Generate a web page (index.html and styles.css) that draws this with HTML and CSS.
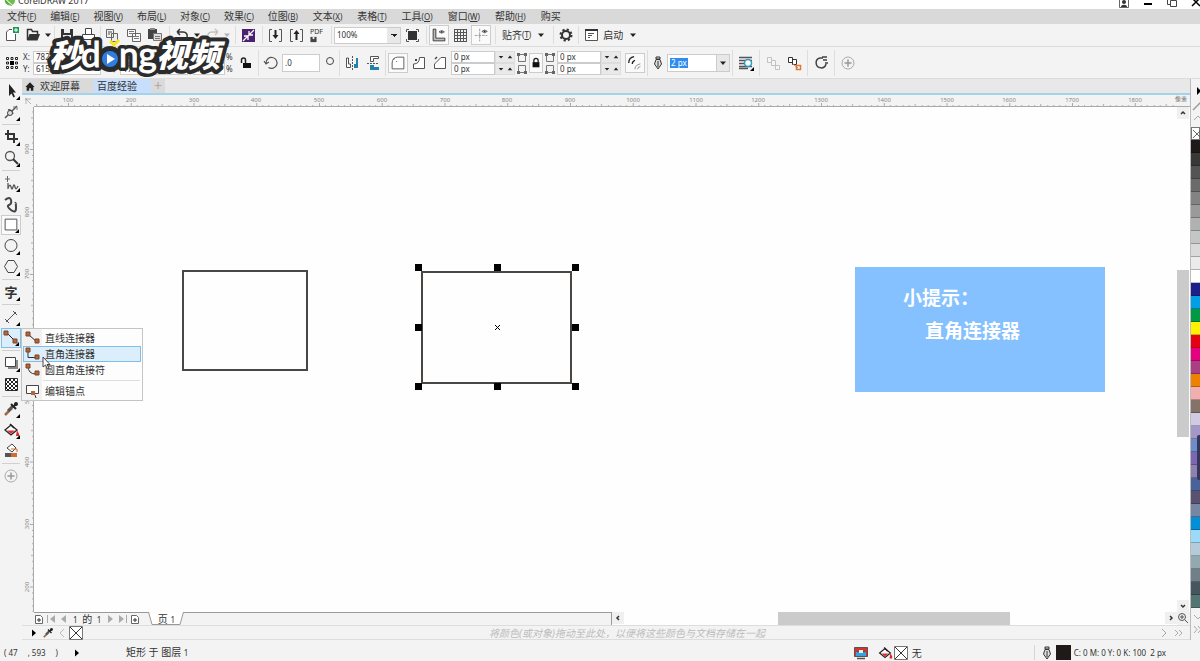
FILE: index.html
```html
<!DOCTYPE html>
<html lang="zh-CN">
<head>
  <meta charset="UTF-8" />
  <title>CorelDRAW 2017</title>
  <meta name="viewport" content="width=device-width, initial-scale=1.0" />
  <link rel="stylesheet" href="styles.css">
</head>
<body>

  <!-- Shared icons -->
  <svg class="defs" aria-hidden="true">
    <symbol id="i-caret" viewBox="0 0 8 8"><path d="M1 2.500h6L4 6z" fill="#222"/></symbol>
    <symbol id="i-play" viewBox="0 0 8 8"><path d="M2 0.500v7L6 4z" fill="#000"/></symbol>
    <symbol id="i-none" viewBox="0 0 14 14"><path d="M0.500 0.500h13v13h-13z" fill="#fff" stroke="#777"/><path d="M1 1l12 12M13 1L1 13" stroke="#333"/></symbol>
    <symbol id="i-pen" viewBox="0 0 12 14"><path d="M4 1h4v2H4zM4 3.500L2.500 8 6 13 9.500 8 8 3.500z" fill="#ddd" stroke="#333"/><path d="M6 5v6" stroke="#333"/></symbol>
    <symbol id="i-plus" viewBox="0 0 20 20"><circle cx="10" cy="10" r="6" fill="none" stroke="#aaa"/><path d="M10 6.500v7M6.500 10h7" stroke="#999" stroke-width="1.500"/></symbol>
    <symbol id="i-bucket" viewBox="0 0 20 20"><path d="M4 10l6-5 6 5-6 5z" fill="#fff" stroke="#222" stroke-width="1.300"/><path d="M6 10.500h8l-4 3.500z" fill="#e03030"/><path d="M9 4l4 4" stroke="#222" stroke-width="1.500"/><path d="M16 10l2 4v2h-3z" fill="#d9252b"/></symbol>
    <symbol id="i-dropper" viewBox="0 0 20 20"><path d="M4 16l7-7" stroke="#a06a48" stroke-width="2.500"/><path d="M7 12l5-5" stroke="#555" stroke-width="3"/><path d="M10 5l5 5M12 8l3-3" stroke="#222" stroke-width="2"/><circle cx="15" cy="5" r="2" fill="#222"/></symbol>
    <symbol id="i-corners" viewBox="0 0 12 24"><path d="M2.500 3.500h7v7h-7zM2.500 14.500h7v7h-7z" fill="none" stroke="#777"/><path d="M1 2h3v3H1zM8 2h3v3H8zM1 20h3v3H1zM8 20h3v3H8z" fill="#666"/></symbol>
    <symbol id="i-page" viewBox="0 0 10 10"><path d="M1.500 1.500h5l2 2v6h-7z" fill="#fff" stroke="#666"/><path d="M3 6h4M5 4v4" stroke="#333"/></symbol>
  </svg>

  <header class="titlebar">
    <svg class="app-icon" viewBox="0 0 14 14"><circle cx="8" cy="4" r="6" fill="#6cbf4a"/><path d="M2 1l9 8-3 1z" fill="#e9f3dd"/><path d="M3 5l7 5" stroke="#2d7d32"/></svg>
    <span class="app-name">CorelDRAW 2017</span>
    <div class="window-buttons">
      <button type="button" aria-label="账户"><svg viewBox="0 0 12 12"><path d="M1.500 0v8.500h9V0" fill="none" stroke="#666"/><circle cx="6" cy="3" r="2" fill="#333"/><path d="M3 8c0-3 6-3 6 0z" fill="#333"/></svg></button>
      <button type="button" aria-label="最小化"><svg viewBox="0 0 12 12"><path d="M2 5h8" stroke="#000" stroke-width="2"/></svg></button>
      <button type="button" aria-label="还原"><svg viewBox="0 0 12 12"><path d="M1.500 0v5.500h3M4.500 1.500h6v6h-6z" fill="none" stroke="#444"/></svg></button>
      <button type="button" aria-label="关闭"><svg viewBox="0 0 12 12"><path d="M2 7l7-7M3 0l7 7" stroke="#000" stroke-width="1.500"/></svg></button>
    </div>
  </header>

  <nav class="menubar">
    <button type="button">文件<small>(<u>F</u>)</small></button>
    <button type="button">编辑<small>(<u>E</u>)</small></button>
    <button type="button">视图<small>(<u>V</u>)</small></button>
    <button type="button">布局<small>(<u>L</u>)</small></button>
    <button type="button">对象<small>(<u>C</u>)</small></button>
    <button type="button">效果<small>(<u>C</u>)</small></button>
    <button type="button">位图<small>(<u>B</u>)</small></button>
    <button type="button">文本<small>(<u>X</u>)</small></button>
    <button type="button">表格<small>(<u>T</u>)</small></button>
    <button type="button">工具<small>(<u>O</u>)</small></button>
    <button type="button">窗口<small>(<u>W</u>)</small></button>
    <button type="button">帮助<small>(<u>H</u>)</small></button>
    <button type="button">购买</button>
  </nav>

  <!-- Standard toolbar -->
  <div class="bar toolbar">
    <div class="group">
      <button type="button" class="icon" aria-label="新建"><svg viewBox="0 0 20 20"><path d="M10 4.500H7L4.500 7v8.500h9V9" fill="#fff" stroke="#555"/><path d="M11 2h6v6h-6z" fill="#1a9c50"/><path d="M14 3v4M12 5h4" stroke="#fff"/></svg></button>
      <button type="button" class="icon" aria-label="打开"><svg viewBox="0 0 20 20"><path d="M4.500 15V4.500h4l1 2h5V9" fill="none" stroke="#333" stroke-width="1.500"/><path d="M4 15.500L6.500 9H17l-2.500 6.500z" fill="#333"/></svg></button>
      <button type="button" class="caret" aria-label="最近文档"><svg><use href="#i-caret"/></svg></button>
    </div>
    <div class="group">
      <button type="button" class="icon" aria-label="保存"><svg viewBox="0 0 20 20"><path d="M4 4h12v12H4z" fill="#333"/><path d="M7 4h6v4H7zM6 10h8v6H6z" fill="#eee"/></svg></button>
      <button type="button" class="icon" aria-label="打印"><svg viewBox="0 0 20 20"><path d="M7.500 9V3.500h6V9M4.500 9.500h12v5h-12z" fill="#fff" stroke="#444"/></svg></button>
    </div>
    <div class="group gap-end">
      <button type="button" class="icon" aria-label="剪切"><svg viewBox="0 0 20 20"><path d="M3.500 4.500h7v8h-7zM8.500 8.500h6v8h-6z" fill="#eee" stroke="#666"/><path d="M5 7h4M5 9h2" stroke="#555"/></svg></button>
      <button type="button" class="icon" aria-label="复制"><svg viewBox="0 0 20 20"><path d="M3.500 4.500h8v7h-8zM8.500 8.500h8v8h-8z" fill="#f8f8f8" stroke="#666"/><path d="M5 6.500h5M5 8.500h3M10 11.500h5M10 13.500h5" stroke="#777"/></svg></button>
      <button type="button" class="icon" aria-label="粘贴"><svg viewBox="0 0 20 20"><path d="M3 4h9v10H3z" fill="#444"/><path d="M5 3h5v2H5z" fill="#888"/><path d="M8.500 8.500h8v7h-8z" fill="#ddd" stroke="#777"/><path d="M10 11.500h5M10 13.500h5" stroke="#777"/></svg></button>
    </div>
    <div class="group gap-end">
      <button type="button" class="icon" aria-label="撤消"><svg viewBox="0 0 20 20"><path d="M5 7h6c3 0 5 2 4 6M5 7l3-3M5 7l3 3" fill="none" stroke="#333" stroke-width="1.500"/></svg></button>
      <button type="button" class="caret" aria-label="撤消列表"><svg><use href="#i-caret"/></svg></button>
      <button type="button" class="icon faded" aria-label="重做"><svg viewBox="0 0 20 20"><path d="M16 7h-6c-3 0-5 2-4 6M16 7l-3-3M16 7l-3 3" fill="none" stroke="#555" stroke-width="1.500"/></svg></button>
      <button type="button" class="caret faded" aria-label="重做列表"><svg><use href="#i-caret"/></svg></button>
    </div>
    <div class="group gap-end">
      <button type="button" class="icon" aria-label="搜索内容"><svg viewBox="0 0 20 20"><path d="M4 4h13v13H4z" fill="#4c2172"/><path d="M5 16L16 5M6 11h4v4M11 6v4h4" stroke="#fff" stroke-width="1.300" fill="none"/></svg></button>
    </div>
    <div class="group gap-end">
      <button type="button" class="icon" aria-label="导入"><svg viewBox="0 0 20 20"><path d="M7 4.500H4.500v12H7M14 4.500h2.500v12H14" fill="none" stroke="#555"/><path d="M10.500 5v7" stroke="#222" stroke-width="2"/><path d="M7.500 10h6l-3 4z" fill="#222"/></svg></button>
      <button type="button" class="icon" aria-label="导出"><svg viewBox="0 0 20 20"><path d="M7 4.500H4.500v12H7M14 4.500h2.500v12H14" fill="none" stroke="#555"/><path d="M10.500 8v7" stroke="#222" stroke-width="2"/><path d="M7.500 9h6l-3-4z" fill="#222"/></svg></button>
      <button type="button" class="icon pdf" aria-label="发布为 PDF"><span>PDF</span><svg viewBox="0 0 8 7"><path d="M0.500 0.500h7v6h-7z" fill="#444"/><path d="M3 0v3h2V0" fill="#eee"/></svg></button>
    </div>
    <div class="group gap-end">
      <select class="zoom-level" aria-label="缩放级别"><option>100%</option></select>
      <button type="button" class="icon" aria-label="全屏预览"><svg viewBox="0 0 20 20"><path d="M6 6h9v9H6z" fill="#333"/><path d="M4.500 7V4.500H7M14 4.500h2.500V7M4.500 14v2.500H7M14 16.500h2.500V14" fill="none" stroke="#555"/></svg></button>
    </div>
    <div class="group gap-end">
      <button type="button" class="icon boxed" aria-label="显示标尺"><svg viewBox="0 0 20 20"><path d="M3.500 3.500h3v10h10v3h-13z" fill="#bbb" stroke="#333"/><path d="M10 6.500q3-3 6 0q-3 3-6 0z" fill="#fff" stroke="#555"/><circle cx="13" cy="6.500" r="1" fill="#222"/></svg></button>
      <button type="button" class="icon" aria-label="显示网格"><svg viewBox="0 0 20 20"><path d="M4.500 4v13M7.500 4v13M10.500 4v13M13.500 4v13M16.500 4v13M4 4.500h13M4 7.500h13M4 10.500h13M4 13.500h13M4 16.500h13" stroke="#555"/></svg></button>
      <button type="button" class="icon boxed" aria-label="显示辅助线"><svg viewBox="0 0 20 20"><path d="M8.500 3v14M3 10.500h14" stroke="#999" stroke-dasharray="3 1"/><path d="M11 6q3-3 6 0q-3 3-6 0z" fill="#fff" stroke="#555"/><circle cx="14" cy="6" r="1" fill="#222"/></svg></button>
    </div>
    <div class="group gap-end">
      <button type="button" class="text-button">贴齐<small>(<u>T</u>)</small><svg class="drop"><use href="#i-caret"/></svg></button>
    </div>
    <div class="group">
      <button type="button" class="icon" aria-label="选项"><svg viewBox="0 0 20 20"><circle cx="10" cy="10" r="4" fill="none" stroke="#333" stroke-width="2"/><circle cx="10" cy="10" r="5.500" fill="none" stroke="#333" stroke-width="2" stroke-dasharray="2.200 2.120"/></svg></button>
    </div>
    <div class="group last">
      <button type="button" class="text-button start"><svg class="pic" viewBox="0 0 20 20"><path d="M4.500 4.500h12v11h-12z" fill="#fff" stroke="#555"/><path d="M4 5h13" stroke="#333" stroke-width="2"/><path d="M7 8.500h6M7 10.500h4M7 12.500h2" stroke="#555"/></svg>启动<svg class="drop"><use href="#i-caret"/></svg></button>
    </div>
  </div>

  <!-- Property bar -->
  <div class="bar property-bar">
    <div class="group">
      <button type="button" class="icon" aria-label="对象原点"><svg viewBox="0 0 20 20"><path d="M4.500 4.500h2v2h-2zM9 4.500h2v2H9zM13.500 4.500h2v2h-2zM4.500 9h2v2h-2zM13.500 9h2v2h-2zM4.500 13.500h2v2h-2zM9 13.500h2v2H9zM13.500 13.500h2v2h-2z" fill="#fff" stroke="#222"/><path d="M8 8h4v4H8z" fill="#000"/></svg></button>
      <div class="fields labelled">
        <label for="pos-x">X:</label><input id="pos-x" class="w-large" value="782 px">
        <label for="pos-y">Y:</label><input id="pos-y" class="w-large" value="615 px">
      </div>
      <div class="fields labelled size">
        <label for="size-w">↔</label><input id="size-w" class="w-large" value="240 px">
        <label for="size-h">↕</label><input id="size-h" class="w-large" value="178 px">
      </div>
      <div class="fields percent">
        <input id="scale-x" class="w-small" value="100.0"><label for="scale-x">%</label>
        <input id="scale-y" class="w-small" value="100.0"><label for="scale-y">%</label>
      </div>
      <button type="button" class="icon" aria-label="锁定比率"><svg viewBox="0 0 20 20"><path d="M5.500 10V7q0-2 2-2t2 2v3" fill="none" stroke="#222" stroke-width="1.500"/><path d="M7 10h8v5H7z" fill="#111"/></svg></button>
    </div>
    <div class="group">
      <label class="icon" for="angle" aria-label="旋转角度"><svg viewBox="0 0 20 20"><path d="M5 10a5.500 5.500 0 1 1 2.500 4.500M3 8l2 3 3-2" fill="none" stroke="#555" stroke-width="1.200"/></svg></label>
      <input id="angle" class="w-angle" value=".0">
      <span class="degree"><svg viewBox="0 0 16 20"><circle cx="9" cy="8" r="3.500" fill="none" stroke="#444"/></svg></span>
    </div>
    <div class="group">
      <button type="button" class="icon" aria-label="水平镜像"><svg viewBox="0 0 20 20"><path d="M4.500 5v9.500h4V11h-2V5z" fill="#fff" stroke="#555"/><path d="M10.500 3v14" stroke="#555" stroke-dasharray="2 1"/><path d="M16 5v10h-4v-4h2V5z" fill="#2382ab"/></svg></button>
      <button type="button" class="icon" aria-label="垂直镜像"><svg viewBox="0 0 20 20"><path d="M7.500 3.500h8v2h-5v3h-3z" fill="#fff" stroke="#555"/><path d="M4 10.500h12" stroke="#555" stroke-dasharray="2 1"/><path d="M7 12h4v2h5v3H7z" fill="#2382ab"/></svg></button>
    </div>
    <div class="group">
      <button type="button" class="icon boxed" aria-label="圆角"><svg viewBox="0 0 20 20"><path d="M3.500 16.500V10q0-6 6-6.500h7v13z" fill="#fff" stroke="#555"/><path d="M5 5h1v1H5zM8 8h1v1H8z" fill="#222"/></svg></button>
      <button type="button" class="icon" aria-label="扇形角"><svg viewBox="0 0 20 20"><path d="M4.500 15.500V11q6 0 6-6.500h5v11z" fill="#fff" stroke="#555"/><path d="M6 6h2v2H6z" fill="#444"/></svg></button>
      <button type="button" class="icon" aria-label="倒棱角"><svg viewBox="0 0 20 20"><path d="M4.500 15.500V11L11 4.500h4.500v11z" fill="#fff" stroke="#555"/><path d="M5 6l2-2" stroke="#444" stroke-width="1.500"/></svg></button>
      <div class="fields spin">
        <input aria-label="左上角半径" value="0 px"><span><svg><use href="#i-caret"/></svg><svg class="up"><use href="#i-caret"/></svg></span>
        <input aria-label="左下角半径" value="0 px"><span><svg><use href="#i-caret"/></svg><svg class="up"><use href="#i-caret"/></svg></span>
      </div>
      <svg class="corners"><use href="#i-corners"/></svg>
      <button type="button" class="icon boxed slim" aria-label="同时编辑所有角"><svg viewBox="0 0 14 20"><path d="M4.500 10V7q0-2.500 2.500-2.500T9.500 7v3" fill="none" stroke="#222" stroke-width="1.500"/><path d="M3 9h8v6H3z" fill="#111"/></svg></button>
      <svg class="corners"><use href="#i-corners"/></svg>
      <div class="fields spin">
        <input aria-label="右上角半径" value="0 px"><span><svg><use href="#i-caret"/></svg><svg class="up"><use href="#i-caret"/></svg></span>
        <input aria-label="右下角半径" value="0 px"><span><svg><use href="#i-caret"/></svg><svg class="up"><use href="#i-caret"/></svg></span>
      </div>
      <span class="spacer"></span>
      <button type="button" class="icon boxed" aria-label="相对角缩放"><svg viewBox="0 0 20 20"><path d="M3 10q0-6 6-7M7 11q0-3 3-4" fill="none" stroke="#222" stroke-width="1.500"/><path d="M10 17q0-5 6-6M13 17q0-3 3-3" fill="none" stroke="#888"/></svg></button>
    </div>
    <div class="group">
      <label class="pen" for="outline" aria-label="轮廓宽度"><svg><use href="#i-pen"/></svg></label>
      <div class="combo">
        <input id="outline" value="2 px">
        <button type="button" aria-label="轮廓宽度列表"><svg><use href="#i-caret"/></svg></button>
      </div>
    </div>
    <div class="group roomy">
      <button type="button" class="icon" aria-label="文本换行"><svg viewBox="0 0 20 20"><path d="M3 4.500h13M3 7.500h13M3 10.500h13M3 13.500h13M3 15.500h9" stroke="#555" stroke-width="1.500"/><circle cx="12" cy="10" r="3.500" fill="#fff" stroke="#2b9bc9" stroke-width="1.500"/><path d="M18 14v4h-4z" fill="#000"/></svg></button>
    </div>
    <div class="group roomy">
      <button type="button" class="icon faded" aria-label="到图层前面"><svg viewBox="0 0 20 20"><path d="M4.500 4.500h4v5h-4zM8.500 7.500h4v5h-4zM12.500 12.500h4v4h-4z" fill="#fff" stroke="#555"/></svg></button>
      <button type="button" class="icon" aria-label="到图层后面"><svg viewBox="0 0 20 20"><path d="M4.500 4.500h4v5h-4zM8.500 6.500h4v5h-4z" fill="#fff" stroke="#333"/><path d="M12.500 12.500h4v4h-4z" fill="#fff" stroke="#d8783a" stroke-width="1.500"/><path d="M9 11l5 4" stroke="#d8783a"/></svg></button>
    </div>
    <div class="group roomy">
      <button type="button" class="icon" aria-label="转换为曲线"><svg viewBox="0 0 20 20"><path d="M12 5H9a5 5 0 1 0 6 6" fill="none" stroke="#444" stroke-width="1.500"/><path d="M11 4h5M12 7h4M14 10h3" stroke="#444" stroke-width="1.500"/></svg></button>
    </div>
    <div class="group roomy last">
      <button type="button" class="icon" aria-label="快速自定义"><svg><use href="#i-plus"/></svg></button>
    </div>
  </div>

  <!-- Video watermark -->
  <svg class="watermark" viewBox="0 0 180 48" role="img" aria-label="秒dong视频">
    <g class="outline">
      <text class="han" x="4" y="34">秒</text><text class="latin" x="36" y="34">d</text><text class="latin" x="74" y="34">ng</text><text class="han" x="111" y="34">视频</text>
      <circle cx="65" cy="26" r="9"/>
    </g>
    <g class="letters">
      <text class="han" x="4" y="34">秒</text><text class="latin" x="36" y="34">d</text><text class="latin" x="74" y="34">ng</text><text class="han" x="111" y="34">视频</text>
    </g>
    <circle cx="65" cy="26" r="8" fill="#2f7de0"/>
    <path d="M62 21v10l8-5z" fill="#fff"/>
    <path d="M65 8l4 4 5-5" fill="none" stroke="#f8e61c" stroke-width="3"/>
  </svg>

  <main class="workspace">
    <aside class="toolbox">
      <button type="button" class="tool" aria-label="选择工具"><svg viewBox="0 0 20 20"><path d="M8 3v12l2.500-2.500 2 4 1.500-1-2-4h3z" fill="#222"/></svg></button>
      <button type="button" class="tool" aria-label="形状工具"><svg viewBox="0 0 20 20"><path d="M4 16L16 4M7 8q3-1 5 4" fill="none" stroke="#555" stroke-width="1.500"/><circle cx="9" cy="11" r="2.500" fill="#ddd" stroke="#444"/><path d="M12 5h4v3" fill="none" stroke="#777"/></svg></button>
      <hr>
      <button type="button" class="tool" aria-label="裁剪工具"><svg viewBox="0 0 20 20"><path d="M7 3v9h10M4 7h9v9" fill="none" stroke="#333" stroke-width="2"/></svg></button>
      <button type="button" class="tool" aria-label="缩放工具"><svg viewBox="0 0 20 20"><circle cx="9" cy="8" r="4.500" fill="none" stroke="#555" stroke-width="1.300"/><path d="M12 11l5 5" stroke="#333" stroke-width="2"/></svg></button>
      <hr>
      <button type="button" class="tool" aria-label="手绘工具"><svg viewBox="0 0 20 20"><path d="M6.500 3v6M4 6h5" stroke="#666"/><path d="M7 10v6M7 15q2-5 3-1t2 0 2 0 3-1" fill="none" stroke="#555" stroke-width="1.300"/></svg></button>
      <button type="button" class="tool plain" aria-label="艺术笔工具"><svg viewBox="0 0 20 20"><path d="M4 6q5-4 6 0t-2 5 2 5 5-2-1-5" fill="none" stroke="#444" stroke-width="2"/></svg></button>
      <button type="button" class="tool boxed" aria-label="矩形工具"><svg viewBox="0 0 20 20"><path d="M3.500 3.500h13v12h-13z" fill="#fff" stroke="#444"/></svg></button>
      <button type="button" class="tool" aria-label="椭圆形工具"><svg viewBox="0 0 20 20"><circle cx="10" cy="9.500" r="6" fill="none" stroke="#444"/></svg></button>
      <button type="button" class="tool" aria-label="多边形工具"><svg viewBox="0 0 20 20"><path d="M7 3.500h6l3.500 6-3.500 6H7l-3.500-6z" fill="none" stroke="#444"/></svg></button>
      <hr>
      <button type="button" class="tool char">字</button>
      <hr>
      <button type="button" class="tool" aria-label="平行度量工具"><svg viewBox="0 0 20 20"><path d="M5 15L15 5M4 12l4 4M12 4l4 4" stroke="#555"/></svg></button>
      <div class="tool-slot">
        <button type="button" class="tool active" aria-label="连接器工具"><svg viewBox="0 0 18 18"><path d="M5 4l9 9" stroke="#222"/><path d="M2 2h4v4H2zM11 10h4v4h-4z" fill="#b5653a" stroke="#7d4526"/></svg></button>
        <div class="flyout">
          <button type="button"><svg viewBox="0 0 18 14"><path d="M5 4l8 7" stroke="#222"/><path d="M2 1h4v4H2zM11 8h4v4h-4z" fill="#b5653a" stroke="#7d4526"/></svg>直线连接器</button>
          <button type="button" class="current"><svg viewBox="0 0 18 14"><path d="M4 3v7.500h8" fill="none" stroke="#333"/><path d="M2 1h4v4H2zM11 8h4v4h-4z" fill="#b5653a" stroke="#7d4526"/></svg>直角连接器</button>
          <button type="button"><svg viewBox="0 0 18 14"><path d="M4 3q0 8 8 8" fill="none" stroke="#333"/><path d="M2 1h4v4H2zM11 8h4v4h-4z" fill="#b5653a" stroke="#7d4526"/></svg>圆直角连接符</button>
          <hr>
          <button type="button"><svg viewBox="0 0 18 14"><path d="M2.500 1.500h12v8h-12z" fill="#fff" stroke="#444"/><path d="M7 7h4v4H7z" fill="#b5653a"/><path d="M11 11l1 3" stroke="#333"/></svg>编辑锚点</button>
          <svg class="cursor" viewBox="0 0 10 14"><path d="M1 1v10l2.500-2 2 4 1.500-1-2-3.500h3z" fill="#fff" stroke="#444"/></svg>
        </div>
      </div>
      <hr>
      <button type="button" class="tool" aria-label="阴影工具"><svg viewBox="0 0 20 20"><path d="M7 7h10v9H7z" fill="#888"/><path d="M4.500 4.500h10v9h-10z" fill="#fff" stroke="#444"/></svg></button>
      <button type="button" class="tool plain" aria-label="透明度工具"><svg viewBox="0 0 20 20"><path d="M4.500 4.500h12v12h-12z" fill="#fff" stroke="#333"/><path d="M4 6h12M4 10h12M4 14h12" stroke="#222" stroke-width="2" stroke-dasharray="2 2"/><path d="M6 8h11M6 12h11M6 16h11" stroke="#222" stroke-width="2" stroke-dasharray="2 2"/></svg></button>
      <hr>
      <button type="button" class="tool" aria-label="颜色滴管工具"><svg><use href="#i-dropper"/></svg></button>
      <button type="button" class="tool" aria-label="交互式填充工具"><svg><use href="#i-bucket"/></svg></button>
      <button type="button" class="tool plain" aria-label="智能填充工具"><svg viewBox="0 0 20 20"><path d="M6 7l5-4 4 4-4 4z" fill="#fff" stroke="#444"/><path d="M10 8h6v3" fill="none" stroke="#c97135"/><path d="M4 12h12v4H4z" fill="#c97135"/><path d="M4 12h6v4H4z" fill="#555"/></svg></button>
      <hr>
      <button type="button" class="tool plain" aria-label="添加工具"><svg><use href="#i-plus"/></svg></button>
    </aside>

    <section class="document">
      <div class="tabs">
        <button type="button" class="tab"><svg viewBox="0 0 12 12"><path d="M6 1L0.500 6.500H2V11h3V8h2v3h3V6.500h1.500z" fill="#222"/></svg>欢迎屏幕</button>
        <button type="button" class="tab open">百度经验</button>
        <button type="button" class="tab add" aria-label="新建文档">+</button>
      </div>

      <div class="ruler-row">
        <svg class="ruler-corner" viewBox="0 0 12 12"><path d="M3 4h6M4 3v6M4 4l5 5" stroke="#999" stroke-width="0.700"/></svg>
        <svg class="ruler-x">
          <defs><pattern id="ticks-x" x="34" width="62.750" height="12" patternUnits="userSpaceOnUse"><path d="M0.500 8v4M31.500 9v3M6.500 10v2M12.500 10v2M19.500 10v2M25.500 10v2M38.500 10v2M44.500 10v2M50.500 10v2M56.500 10v2" stroke="#aaa"/></pattern></defs>
          <rect width="1143" height="12" fill="url(#ticks-x)"/>
          <text x="34" y="7">100</text><text x="97" y="7">200</text><text x="160" y="7">300</text><text x="222" y="7">400</text><text x="285" y="7">500</text><text x="348" y="7">600</text><text x="411" y="7">700</text><text x="473" y="7">800</text><text x="536" y="7">900</text><text x="599" y="7">1000</text><text x="662" y="7">1100</text><text x="724" y="7">1200</text><text x="787" y="7">1300</text><text x="850" y="7">1400</text><text x="913" y="7">1500</text><text x="975" y="7">1600</text><text x="1038" y="7">1700</text><text x="1101" y="7">1800</text>
        </svg>
        <span class="unit">像素</span>
      </div>

      <div class="view">
        <svg class="ruler-y">
          <defs><pattern id="ticks-y" y="42" width="12" height="62.500" patternUnits="userSpaceOnUse"><path d="M8 0.500h4M9 31.500h3M10 6.500h2M10 12.500h2M10 19.500h2M10 25.500h2M10 37.500h2M10 44.500h2M10 50.500h2M10 56.500h2" stroke="#aaa"/></pattern></defs>
          <rect width="12" height="506" fill="url(#ticks-y)"/>
          <g transform="rotate(-90)"><text x="-42" y="7">900</text><text x="-105" y="7">800</text><text x="-167" y="7">700</text><text x="-230" y="7">600</text><text x="-292" y="7">500</text><text x="-355" y="7">400</text><text x="-417" y="7">300</text><text x="-480" y="7">200</text></g>
        </svg>

        <div class="canvas">
          <div class="shape first"></div>
          <div class="shape second"></div>
          <svg class="handles" viewBox="0 0 164 126">
            <path d="M0 0h7v7H0zM79 0h7v7h-7zM157 0h7v7h-7zM0 60h7v7H0zM157 60h7v7h-7zM0 119h7v7H0zM79 119h7v7h-7zM157 119h7v7h-7z"/>
            <path d="M80 61l5 5M85 61l-5 5" stroke="#000"/>
          </svg>
          <div class="tip">
            <p>小提示：</p>
            <p class="indent">直角连接器</p>
          </div>
        </div>

        <div class="scroll-y">
          <button type="button" aria-label="向上滚动"><svg viewBox="0 0 12 12"><path d="M4 7l2-2 2 2" fill="none" stroke="#333" stroke-width="1.500"/></svg></button>
          <div class="thumb"></div>
          <button type="button" aria-label="向下滚动"><svg viewBox="0 0 12 12"><path d="M4 5l2 2 2-2" fill="none" stroke="#333" stroke-width="1.500"/></svg></button>
        </div>
      </div>

      <div class="page-row">
        <div class="page-nav">
          <button type="button" aria-label="在前面添加页"><svg><use href="#i-page"/></svg></button>
          <button type="button" aria-label="第一页"><svg viewBox="0 0 10 10"><path d="M1.500 1v8" stroke="#aaa"/><path d="M9 1v8L4 5z" fill="#aaa"/></svg></button>
          <button type="button" aria-label="上一页"><svg viewBox="0 0 10 10"><path d="M8 1v8L3 5z" fill="#aaa"/></svg></button>
          <span class="page-count"><small>1</small> 的 <small>1</small></span>
          <button type="button" aria-label="下一页"><svg viewBox="0 0 10 10"><path d="M2 1v8l5-4z" fill="#aaa"/></svg></button>
          <button type="button" aria-label="最后一页"><svg viewBox="0 0 10 10"><path d="M1 1v8l5-4z" fill="#aaa"/><path d="M8.500 1v8" stroke="#aaa"/></svg></button>
          <button type="button" aria-label="在后面添加页"><svg><use href="#i-page"/></svg></button>
          <button type="button" class="page-tab"><svg viewBox="0 0 36 14"><path d="M0.500 0L4 12.500h28L35.500 0" fill="#fff" stroke="#999"/></svg><span>页 <small>1</small></span></button>
        </div>
        <div class="scroll-x">
          <button type="button" aria-label="向左滚动"><svg viewBox="0 0 12 12"><path d="M7 4L5 6l2 2" fill="none" stroke="#333" stroke-width="1.500"/></svg></button>
          <div class="thumb"></div>
          <button type="button" aria-label="向右滚动"><svg viewBox="0 0 12 12"><path d="M5 4l2 2-2 2" fill="none" stroke="#333" stroke-width="1.500"/></svg></button>
        </div>
        <button type="button" class="navigator" aria-label="导航器"><svg viewBox="0 0 12 12"><circle cx="5" cy="5" r="3.500" fill="none" stroke="#555"/><path d="M5 3v4M3 5h4M8 8l3 3" stroke="#555"/></svg></button>
      </div>

      <div class="doc-palette">
        <button type="button" aria-label="文档调色板"><svg class="small"><use href="#i-play"/></svg></button>
        <button type="button" aria-label="滴管"><svg><use href="#i-dropper"/></svg></button>
        <button type="button" aria-label="向左"><svg viewBox="0 0 14 14"><path d="M9 3L5 7l4 4" fill="none" stroke="#bbb"/></svg></button>
        <button type="button" aria-label="无颜色"><svg><use href="#i-none"/></svg></button>
        <span class="hint">将颜色(或对象)拖动至此处，以便将这些颜色与文档存储在一起</span>
        <button type="button" aria-label="向右"><svg viewBox="0 0 14 14"><path d="M5 3l4 4-4 4" fill="none" stroke="#aaa"/></svg></button>
        <button type="button" aria-label="展开"><svg viewBox="0 0 14 14"><path d="M4 4l3 3-3 3M8 4l3 3-3 3" fill="none" stroke="#aaa"/></svg></button>
      </div>
    </section>

    <aside class="palette">
      <div class="palette-head">
        <svg viewBox="0 0 10 48"><path d="M6 8v8l4-4z" fill="#000"/><path d="M2 31l8-8" stroke="#999" stroke-width="1.500"/><path d="M3 41l4-4 4 4" fill="none" stroke="#aaa"/></svg>
      </div>
      <ul class="swatches">
        <li class="none"><svg viewBox="0 0 10 13"><path d="M1 2l9 9M1 11l9-9" stroke="#555"/></svg></li>
        <li class="c1"></li><li class="c2"></li><li class="c3"></li><li class="c4"></li><li class="c5"></li><li class="c6"></li>
        <li class="c7"></li><li class="c8"></li><li class="c9"></li><li class="c10"></li><li class="c11"></li><li class="c12"></li>
        <li class="c13"></li><li class="c14"></li><li class="c15"></li><li class="c16"></li><li class="c17"></li><li class="c18"></li>
        <li class="c19"></li><li class="c20"></li><li class="c21"></li><li class="c22"></li><li class="c23"></li><li class="c24"></li>
        <li class="c25"></li><li class="c26"></li><li class="c27"></li><li class="c28"></li><li class="c29"></li><li class="c30"></li>
        <li class="c31"></li><li class="c32"></li><li class="c33"></li><li class="c34"></li><li class="c35"></li><li class="c36"></li>
      </ul>
      <div class="palette-foot">
        <svg viewBox="0 0 10 30"><path d="M3 5l4 4 4-4M3 16l3 3.500-3 3.500M7 16l3 3.500-3 3.500" fill="none" stroke="#aaa"/></svg>
      </div>
      <div class="side-handle"></div>
    </aside>
  </main>

  <footer class="statusbar">
    <span class="coords"><span>( 47</span><span>, 593</span><span>)</span></span>
    <svg class="small"><use href="#i-play"/></svg>
    <span class="selection">矩形 于 图层 <small>1</small></span>
    <div class="fill-info">
      <svg viewBox="0 0 14 14"><path d="M0.500 1.500h13v9h-13z" fill="#d9302f" stroke="#555"/><path d="M2 6h10v4H2z" fill="#36a3dc"/><path d="M3 5.500h8M3 12.500h8" stroke="#555" stroke-width="1.500"/><path d="M5 4h4v3H5z" fill="#eee"/></svg>
      <svg class="bucket"><use href="#i-bucket"/></svg>
      <svg class="nofill"><use href="#i-none"/></svg>
      <span>无</span>
    </div>
    <div class="outline-info">
      <svg class="nib"><use href="#i-pen"/></svg>
      <i class="ink"></i>
      <small>C: 0 M: 0 Y: 0 K: 100&nbsp; 2 px</small>
    </div>
  </footer>

</body>
</html>
```
FILE: styles.css
```css
* { margin: 0; padding: 0; box-sizing: border-box; }
body {
  font-family: "Noto Sans", "Noto Sans CJK SC", sans-serif;
  font-size: 10px;
  line-height: 14px;
  color: #333;
  background: #f3f3f3;
  display: flex;
  flex-direction: column;
  height: 100vh;
  overflow: hidden;
  position: relative;
}
button, input, select {
  font: inherit;
  color: inherit;
  border: none;
  background: none;
}
button { cursor: pointer; }
svg { display: block; flex: none; }
u { text-decoration-thickness: 1px; }
ul { list-style: none; }
.defs { position: absolute; width: 0; height: 0; }
.faded { opacity: 0.3; }

/* Title bar */
.titlebar {
  height: 9px;
  flex: none;
  display: flex;
  align-items: flex-end;
  overflow: hidden;
  background: #fff;
}
.app-icon { width: 14px; height: 12px; margin-left: 2px; }
.app-name {
  font-size: 9px;
  line-height: 12px;
  margin-left: 2px;
  height: 14px;
}
.window-buttons {
  display: flex;
  gap: 12px;
  margin-left: auto;
}
.window-buttons button { width: 12px; height: 10px; }
.window-buttons button:last-child { margin-right: -2px; }

/* Menu bar */
.menubar {
  flex: none;
  height: 15px;
  display: flex;
  gap: 14px;
  padding-left: 7px;
  background: #d9d9d9;
}
.menubar button { display: flex; line-height: 15px; }
.menubar small, .text-button small { font-size: 8px; }
.menubar button:nth-child(n+8) { padding-left: 1px; }

/* Toolbars */
.bar {
  flex: none;
  display: flex;
  align-items: center;
  border-bottom: 1px solid #dcdcdc;
}
.toolbar { height: 23px; }
.property-bar { height: 32px; }
.group {
  display: flex;
  align-items: center;
  gap: 1px;
  padding: 0 2px;
  border-right: 1px solid #ddd;
}
.toolbar .group { height: 18px; }
.property-bar .group { height: 26px; }
.toolbar .gap-end { padding-right: 4px; }
.bar .last { border-right: none; }
.icon { width: 20px; height: 20px; flex: none; }
.icon svg { width: 100%; height: 100%; }
.boxed { border: 1px solid #ccc; background: #fafafa; }
.caret { width: 8px; height: 8px; }
.caret svg { width: 8px; height: 8px; }
.pdf {
  padding-left: 3px;
  font-size: 7px;
  line-height: 9px;
  text-align: left;
}
.pdf svg { width: 7px; height: 7px; }
.zoom-level {
  width: 67px;
  height: 17px;
  padding-left: 2px;
  font-size: 8px;
  appearance: none;
  border: 1px solid #ccc;
  background:
    conic-gradient(from -45deg at 50% 100%, #222 90deg, transparent 0) 56px 6px / 6px 3px no-repeat,
    linear-gradient(to right, #fff 52px, #e8e8e8 52px);
}
.text-button {
  display: flex;
  align-items: center;
  padding: 0 4px;
}
.text-button.start { padding: 0; }
.text-button .drop { width: 8px; height: 8px; margin-left: 6px; }
.text-button .pic { width: 20px; height: 20px; margin-right: 2px; }

/* Property fields */
.fields {
  display: grid;
  align-items: center;
  font-size: 8px;
  line-height: 11px;
}
.fields input {
  height: 12px;
  padding-left: 2px;
  border: 1px solid #ccc;
  background: #fff;
  min-width: 0;
}
.labelled { grid-template-columns: 10px auto; }
.labelled.size { padding-left: 8px; }
.percent { grid-template-columns: auto 10px; padding-left: 4px; }
.percent label { padding-left: 1px; }
.w-large { width: 68px; }
.w-small { width: 32px; }
.w-angle {
  width: 38px;
  height: 18px;
  padding-left: 2px;
  font-size: 8px;
  border: 1px solid #ccc;
  background: #fff;
}
.degree svg { width: 16px; height: 20px; }
.spin { grid-template-columns: 44px 20px; }
.spin span {
  height: 12px;
  display: flex;
  align-items: center;
  justify-content: space-around;
  border: 1px solid #ddd;
  background: #e9e9e9;
}
.spin svg { width: 6px; height: 6px; }
.spin .up { transform: rotate(180deg); }
.corners { width: 12px; height: 24px; }
.slim { width: 14px; }
.spacer { width: 2px; }
.pen svg { width: 12px; height: 14px; margin: 0 2px; }
.combo {
  display: flex;
  width: 63px;
  height: 18px;
  border: 1px solid #ccc;
  background: #fff;
}
.combo input {
  width: 48px;
  padding-left: 3px;
  font-size: 8px;
  color: #fff;
  background: linear-gradient(#2f8df0, #2f8df0) 2px 3px / 18px 10px no-repeat;
}
.combo button {
  width: 14px;
  padding: 0 2px;
  border-left: 1px solid #ccc;
  background: #e8e8e8;
}
.combo svg { width: 8px; height: 8px; }
.property-bar .roomy { padding: 0 3px; }

/* Watermark over the toolbars */
.watermark {
  position: absolute;
  left: 45px;
  top: 33px;
  width: 180px;
  height: 48px;
  overflow: visible;
  z-index: 5;
}
.watermark .han { font: italic 900 32px "Noto Sans CJK SC", sans-serif; }
.watermark .latin { font: 400 35px "Lato", sans-serif; }
.watermark .outline {
  fill: #2b2b2b;
  stroke: #2b2b2b;
  stroke-width: 8px;
  stroke-linejoin: round;
}
.watermark .letters { fill: #fff; }
.watermark .letters .latin { stroke: #fff; stroke-width: 1px; }

/* Workspace */
.workspace {
  flex: 1;
  min-height: 0;
  display: grid;
  grid-template-columns: 22px 1fr 10px;
}
.toolbox {
  display: flex;
  flex-direction: column;
  align-items: center;
  gap: 1px;
  padding-top: 2px;
}
.toolbox > hr {
  width: 18px;
  margin: 1px 0;
  border: none;
  border-top: 1px solid #d0d0d0;
}
.tool {
  width: 20px;
  height: 20px;
  flex: none;
  position: relative;
}
.tool svg { width: 100%; height: 100%; }
.tool::after {
  content: "";
  position: absolute;
  right: 1px;
  bottom: 1px;
  border: 2px solid #000;
  border-top-color: transparent;
  border-left-color: transparent;
}
.tool.plain::after { display: none; }
.tool.char { font-size: 13px; font-weight: bold; line-height: 18px; }
.tool.active { border: 1px solid #7dbfe8; background: #dceefb; }
.tool-slot { position: relative; height: 20px; flex: none; }

/* Connector flyout */
.flyout {
  position: absolute;
  left: 20px;
  top: 0;
  width: 122px;
  padding: 1px;
  display: flex;
  flex-direction: column;
  background: linear-gradient(to right, #f1f1f1 20px, #fdfdfd 20px);
  border: 1px solid #c4c4c4;
  z-index: 10;
}
.flyout button {
  display: flex;
  align-items: center;
  gap: 3px;
  height: 16px;
  border: 1px solid transparent;
  white-space: nowrap;
}
.flyout button svg { width: 18px; height: 14px; }
.flyout .current { border-color: #7dbfe8; background: #dceefb; }
.flyout hr {
  margin: 2px 1px 2px 20px;
  border: none;
  border-top: 1px solid #ddd;
}
.cursor {
  position: absolute;
  left: 20px;
  top: 27px;
  width: 10px;
  height: 14px;
}

/* Document */
.document {
  min-width: 0;
  min-height: 0;
  display: flex;
  flex-direction: column;
}
.tabs {
  flex: none;
  height: 16px;
  display: flex;
  background: #e8e8e8;
  border-bottom: 2px solid #a3d3ec;
}
.tab {
  display: flex;
  align-items: center;
  gap: 5px;
  padding: 0 14px 0 3px;
  background: #dadada;
}
.tab svg { width: 10px; height: 11px; }
.tabs .open { background: #c7dffc; }
.tabs .add { padding: 0 3px; font-size: 14px; color: #aaa; }
.ruler-row {
  flex: none;
  height: 12px;
  display: flex;
  position: relative;
}
.ruler-row text, .ruler-y text {
  font-size: 6px;
  fill: #888;
  text-anchor: middle;
}
.ruler-corner { width: 12px; height: 12px; }
.ruler-x {
  flex: 1;
  min-width: 0;
  height: 12px;
  border-bottom: 1px solid #aaa;
}
.unit {
  position: absolute;
  right: 3px;
  top: 0;
  font-size: 6px;
  line-height: 8px;
  color: #777;
}
.view {
  flex: 1;
  min-height: 0;
  display: flex;
}
.ruler-y { width: 12px; height: 100%; border-right: 1px solid #aaa; }
.canvas {
  flex: 1;
  min-width: 0;
  position: relative;
  overflow: hidden;
  background: #fefefe;
}
.shape { position: absolute; border: 2px solid #4a4643; }
.shape.first { left: 148px; top: 163px; width: 126px; height: 101px; }
.shape.second { left: 387px; top: 164px; width: 151px; height: 113px; }
.handles {
  position: absolute;
  left: 381px;
  top: 157px;
  width: 164px;
  height: 126px;
}
.tip {
  position: absolute;
  left: 821px;
  top: 160px;
  width: 250px;
  height: 125px;
  padding: 15px 48px;
  font-size: 19px;
  font-weight: bold;
  line-height: 33px;
  color: #fff;
  background: #85c0ff;
}
.tip .indent { padding-left: 22px; }

/* Scroll bars */
.scroll-y {
  width: 13px;
  display: flex;
  flex-direction: column;
  background: #fefefe;
}
.scroll-y button, .scroll-x button, .navigator { width: 12px; height: 12px; background: #f0f0f0; }
.scroll-y .thumb {
  flex: none;
  height: 33%;
  margin: 151px 1px auto 0;
  background: #cbcbcb;
}
.page-row {
  flex: none;
  height: 13px;
  display: flex;
  padding: 0 1px 0 12px;
}
.page-nav {
  width: 50%;
  display: flex;
  align-items: center;
  gap: 2px;
  border-top: 1px solid #999;
  border-right: 1px solid #999;
}
.page-nav button { width: 10px; height: 10px; flex: none; }
.page-nav button svg { width: 10px; height: 10px; }
.page-count { padding: 0 3px; word-spacing: 2px; }
.page-nav small { font-size: 8px; }
.page-nav .page-tab {
  width: 36px;
  height: 14px;
  margin-left: 6px;
  display: grid;
  place-items: center;
}
.page-tab > * { grid-area: 1 / 1; }
.page-nav .page-tab svg { width: 36px; height: 14px; }
.page-tab span { line-height: 12px; }
.scroll-x {
  flex: 1;
  display: flex;
  justify-content: space-between;
  background: #fefefe;
}
.scroll-x .thumb { width: 41%; background: #cbcbcb; }
.doc-palette {
  flex: none;
  height: 15px;
  display: flex;
  align-items: center;
  padding: 0 5px;
  border-top: 1px solid #ddd;
  border-bottom: 1px solid #ddd;
}
.doc-palette button { width: 14px; height: 14px; flex: none; }
.doc-palette svg { width: 14px; height: 14px; }
.doc-palette svg.small, .statusbar svg.small { width: 8px; height: 8px; margin: 0 3px; }
.hint {
  flex: 1;
  padding-left: 14px;
  text-align: center;
  font-style: italic;
  color: #bbb;
}

/* Colour palette */
.palette {
  position: relative;
  min-height: 0;
  display: flex;
  flex-direction: column;
  overflow: hidden;
  border-left: 1px solid #bbb;
  background: #f3f3f3;
}
.palette-head, .palette-foot { flex: none; }
.palette-head svg { width: 10px; height: 48px; }
.palette-foot svg { width: 10px; height: 30px; }
.swatches { flex: 1; min-height: 0; overflow: hidden; }
.swatches li { height: 13px; border-bottom: 1px solid rgba(0, 0, 0, 0.25); }
.swatches .none { background: #fff; border: 1px solid #777; }
.none svg { width: 9px; height: 12px; }
.c1 { background: #1f1a17; }
.c2 { background: #3a3837; }
.c3 { background: #545454; }
.c4 { background: #6b6b6b; }
.c5 { background: #838383; }
.c6 { background: #9a9a9a; }
.c7 { background: #b0b2b2; }
.c8 { background: #c4c6c6; }
.c9 { background: #dadada; }
.c10 { background: #ebebeb; }
.c11 { background: #fff; }
.c12 { background: #1d2088; }
.c13 { background: #00a0e9; }
.c14 { background: #009944; }
.c15 { background: #fff100; }
.c16 { background: #e60012; }
.c17 { background: #e4007f; }
.c18 { background: #ab3f83; }
.c19 { background: #ee8200; }
.c20 { background: #f3aeb0; }
.c21 { background: #85736a; }
.c22 { background: #d0cbe3; }
.c23 { background: #a297c8; }
.c24 { background: #6d8cc9; }
.c25 { background: #7b68b0; }
.c26 { background: #8d81b0; }
.c27 { background: #49639a; }
.c28 { background: #5a5070; }
.c29 { background: #7587a5; }
.c30 { background: #0090d8; }
.c31 { background: #9ddaf8; }
.c32 { background: #b4ccda; }
.c33 { background: #93a9b0; }
.c34 { background: #6f8088; }
.c35 { background: #475560; }
.c36 { background: #547672; }
.side-handle {
  position: absolute;
  right: 0;
  top: 356px;
  width: 3px;
  height: 45px;
  border-radius: 2px 0 0 2px;
  background: #34365c;
}

/* Status bar */
.statusbar {
  flex: none;
  height: 21px;
  display: flex;
  align-items: center;
  padding: 4px 34px 0 4px;
}
.statusbar small { font-size: 8px; }
.coords {
  display: flex;
  gap: 10px;
  width: 66px;
  font-size: 8px;
}
.selection { margin-left: 42px; }
.fill-info {
  display: flex;
  align-items: center;
  margin-left: auto;
}
.fill-info svg { width: 14px; height: 14px; }
.fill-info svg.bucket { width: 18px; height: 18px; margin-left: 8px; }
.fill-info .nofill { margin-right: 4px; }
.outline-info {
  display: flex;
  align-items: center;
  gap: 3px;
  margin-left: 112px;
  padding-left: 6px;
  border-left: 1px solid #d5d5d5;
}
.outline-info .nib { width: 12px; height: 14px; }
.ink { width: 15px; height: 15px; background: #1f1a17; }
```
